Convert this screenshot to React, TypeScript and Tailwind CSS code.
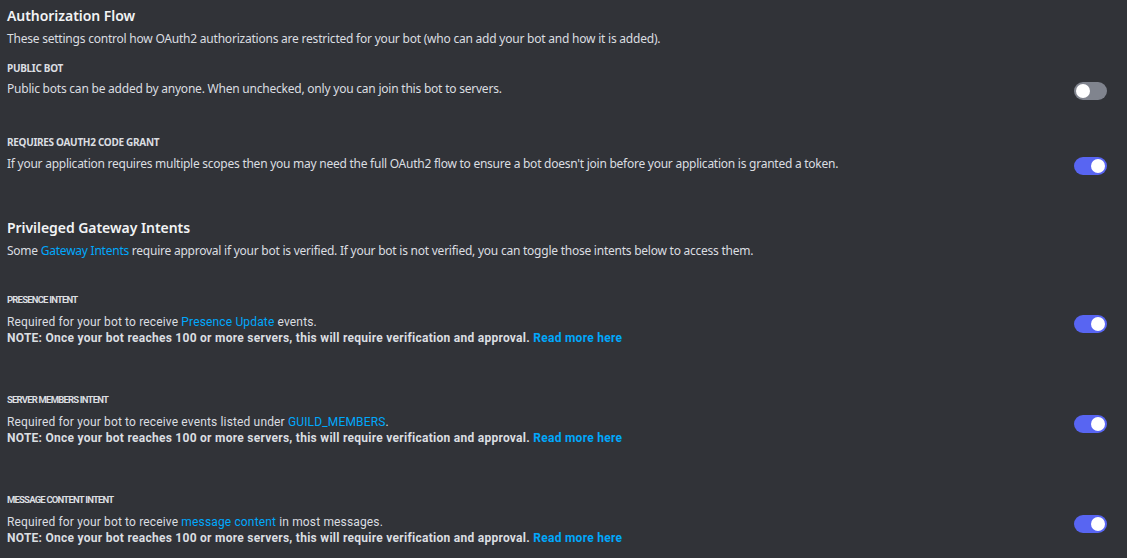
import React from "react";

const Toggle = ({ on, className = "" }: { on: boolean; className?: string }) => (
  <div
    className={`w-[33px] h-[18px] rounded-full flex items-center px-[2px] shrink-0 ${
      on ? "bg-[#5865f2] justify-end" : "bg-[#80848e] justify-start"
    } ${className}`}
  >
    <div className="w-[14px] h-[14px] rounded-full bg-white" />
  </div>
);

const top = { fontFamily: '"Noto Sans", "Open Sans", sans-serif' };
const rob = { fontFamily: 'Roboto, "Liberation Sans", sans-serif' };

const Intent = ({
  label,
  pre,
  link,
  post,
  className = "",
}: {
  label: string;
  pre: string;
  link: string;
  post: string;
  className?: string;
}) => (
  <div className={className} style={rob}>
    <div className="text-[9.5px] leading-[12px] font-bold text-[#dbdee1] tracking-[-0.8px]">{label}</div>
    <div className="flex items-start justify-between mt-[8px]">
      <div className="text-[12px] leading-[16px] text-[#dbdee1]">
        <div className="tracking-[0.15px]">
          {pre}
          <span className="text-[#00a8fc]">{link}</span>
          {post}
        </div>
        <div className="font-bold tracking-[0.27px]">
          NOTE: Once your bot reaches 100 or more servers, this will require verification and approval.{" "}
          <span className="text-[#00a8fc]">Read more here</span>
        </div>
      </div>
      <Toggle on className="mt-[1px]" />
    </div>
  </div>
);

export default function App() {
  return (
    <div className="w-[1127px] h-[558px] bg-[#313338] overflow-hidden pl-[7px] pr-[20px] pt-[6px]">
      <div style={top}>
        <div className="text-[14px] leading-[20px] font-semibold text-[#f2f3f5] tracking-[-0.05px]">Authorization Flow</div>
        <div className="mt-[5px] text-[12px] leading-[16px] text-[#dbdee1] tracking-[-0.22px]">
          These settings control how OAuth2 authorizations are restricted for your bot (who can add your bot and how it is added).
        </div>

        <div className="mt-[15px] text-[10px] leading-[12px] font-bold text-[#dbdee1] tracking-[-0.3px]">PUBLIC BOT</div>
        <div className="mt-[7px] h-[16px] flex items-center justify-between">
          <div className="text-[12px] leading-[16px] text-[#dbdee1] tracking-[-0.22px]">
            Public bots can be added by anyone. When unchecked, only you can join this bot to servers.
          </div>
          <Toggle on={false} className="translate-y-[2px]" />
        </div>

        <div className="mt-[39px] text-[10px] leading-[12px] font-bold text-[#dbdee1] tracking-[-0.3px]">REQUIRES OAUTH2 CODE GRANT</div>
        <div className="mt-[8px] h-[16px] flex items-center justify-between">
          <div className="text-[12px] leading-[16px] text-[#dbdee1] tracking-[-0.25px]">
            If your application requires multiple scopes then you may need the full OAuth2 flow to ensure a bot doesn't join before your application is granted a token.
          </div>
          <Toggle on className="translate-y-[2px]" />
        </div>

        <div className="mt-[46px] text-[14px] leading-[20px] font-semibold text-[#f2f3f5] tracking-[-0.05px]">Privileged Gateway Intents</div>
        <div className="mt-[5px] text-[12px] leading-[16px] text-[#dbdee1] tracking-[-0.24px]">
          Some <span className="text-[#00a8fc]">Gateway Intents</span> require approval if your bot is verified. If your bot is not verified, you can toggle those intents below to access them.
        </div>
      </div>

      <Intent
        className="mt-[35px]"
        label="PRESENCE INTENT"
        pre="Required for your bot to receive "
        link="Presence Update"
        post=" events."
      />
      <Intent
        className="mt-[48px]"
        label="SERVER MEMBERS INTENT"
        pre="Required for your bot to receive events listed under "
        link="GUILD_MEMBERS"
        post="."
      />
      <Intent
        className="mt-[48px]"
        label="MESSAGE CONTENT INTENT"
        pre="Required for your bot to receive "
        link="message content"
        post=" in most messages."
      />
    </div>
  );
}
